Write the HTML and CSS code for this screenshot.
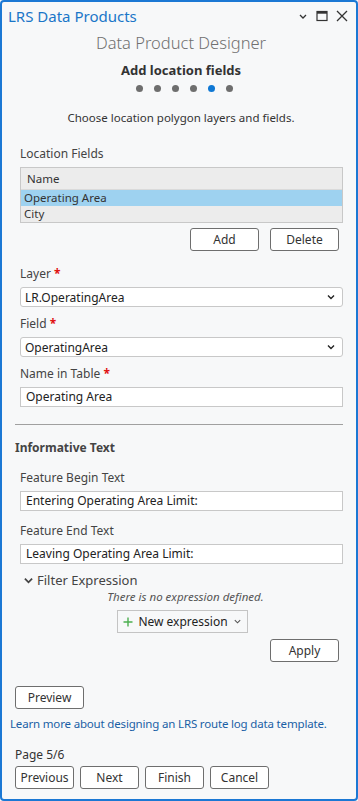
FILE: index.html
```html
<!DOCTYPE html>
<html lang="en">
<head>
  <meta charset="UTF-8" />
  <meta name="viewport" content="width=device-width, initial-scale=1.0"/>
  <title>LRS Data Products</title>
  <link rel="stylesheet" href="styles.css">
</head>
<body>
  <div class="pane">
    <div class="title-bar">
      <span class="pane-title">LRS Data Products</span>
      <div class="window-icons">
        <svg width="10" height="10" viewBox="0 0 10 10"><path d="M2 4 L5 7 L8 4" fill="none" stroke="#333" stroke-width="1.3"/></svg>
        <svg width="12" height="12" viewBox="0 0 12 12"><rect x="1" y="1.5" width="10" height="9" fill="none" stroke="#333" stroke-width="1.2"/><rect x="1" y="1.5" width="10" height="2.2" fill="#333"/></svg>
        <svg width="12" height="12" viewBox="0 0 12 12"><path d="M1 1 L11 11 M11 1 L1 11" stroke="#333" stroke-width="1.3"/></svg>
      </div>
    </div>

    <div class="designer-title">Data Product Designer</div>
    <div class="step-title">Add location fields</div>
    <div class="step-dots">
      <span class="dot"></span>
      <span class="dot"></span>
      <span class="dot"></span>
      <span class="dot"></span>
      <span class="dot active"></span>
      <span class="dot"></span>
    </div>
    <p class="step-desc">Choose location polygon layers and fields.</p>

    <div class="content">
      <div class="label">Location Fields</div>
      <div class="grid-table">
        <div class="grid-header">Name</div>
        <div class="grid-row selected">Operating Area</div>
        <div class="grid-row">City</div>
      </div>
      <div class="button-row right">
        <button class="btn">Add</button>
        <button class="btn">Delete</button>
      </div>

      <div class="label spaced">Layer <span class="req">*</span></div>
      <div class="combo">
        <span>LR.OperatingArea</span>
        <svg width="10" height="10" viewBox="0 0 10 10"><path d="M2 3.5 L5 6.5 L8 3.5" fill="none" stroke="#222" stroke-width="1.4"/></svg>
      </div>

      <div class="label">Field <span class="req">*</span></div>
      <div class="combo">
        <span>OperatingArea</span>
        <svg width="10" height="10" viewBox="0 0 10 10"><path d="M2 3.5 L5 6.5 L8 3.5" fill="none" stroke="#222" stroke-width="1.4"/></svg>
      </div>

      <div class="label">Name in Table <span class="req">*</span></div>
      <div class="text-input">Operating Area</div>
    </div>

    <hr class="divider">

    <div class="section-title">Informative Text</div>
    <div class="content">
      <div class="label">Feature Begin Text</div>
      <div class="text-input">Entering Operating Area Limit:</div>
      <div class="label">Feature End Text</div>
      <div class="text-input">Leaving Operating Area Limit:</div>

      <div class="expander">
        <svg width="9" height="9" viewBox="0 0 10 10"><path d="M1 3 L5 7 L9 3" fill="none" stroke="#444" stroke-width="2"/></svg>
        <span>Filter Expression</span>
      </div>
      <div class="no-expr">There is no expression defined.</div>
      <div class="new-expr-wrap">
        <div class="new-expr">
          <svg width="10" height="10" viewBox="0 0 10 10"><path d="M5 0.5 V9.5 M0.5 5 H9.5" stroke="#4caf50" stroke-width="1.4"/></svg>
          <span>New expression</span>
          <svg width="9" height="9" viewBox="0 0 10 10"><path d="M2 3.5 L5 6.5 L8 3.5" fill="none" stroke="#555" stroke-width="1.2"/></svg>
        </div>
      </div>
      <div class="button-row right apply-row">
        <button class="btn">Apply</button>
      </div>
    </div>

    <div class="footer">
      <button class="btn">Preview</button>
      <a class="learn-link" href="#">Learn more about designing an LRS route log data template.</a>
      <div class="page-num">Page 5/6</div>
      <div class="nav-row">
        <button class="btn nav">Previous</button>
        <button class="btn nav">Next</button>
        <button class="btn nav">Finish</button>
        <button class="btn nav">Cancel</button>
      </div>
    </div>
  </div>
</body>
</html>
```

FILE: styles.css
```css
body {
  margin: 0;
  font-family: 'Noto Sans', 'Open Sans', sans-serif;
  font-size: 12px;
  color: #333;
  background: #f7f8f9;
}
.pane {
  box-sizing: border-box;
  width: 358px;
  height: 801px;
  border: 2px solid #1b78d4;
  border-radius: 4px;
  background: #f7f8f9;
  overflow: hidden;
}
.title-bar {
  display: flex;
  align-items: center;
  justify-content: space-between;
  height: 28px;
  padding: 0 8px 0 6px;
}
.pane-title {
  color: #1a76c8;
  font-size: 15px;
}
.window-icons {
  display: flex;
  align-items: center;
  gap: 8px;
}
.designer-title {
  text-align: center;
  color: #707070;
  font-size: 16.5px;
  font-weight: 300;
  line-height: 26px;
  padding-left: 4px;
}
.step-title {
  text-align: center;
  font-weight: bold;
  font-size: 13px;
  margin-top: 5px;
  line-height: 18px;
  padding-left: 4px;
}
.step-dots {
  display: flex;
  justify-content: center;
  gap: 11px;
  margin-top: 6px;
  padding-left: 11px;
}
.dot {
  width: 7px;
  height: 7px;
  border-radius: 50%;
  background: #6e6e6e;
}
.dot.active {
  background: #0f78d4;
}
.step-desc {
  text-align: center;
  margin: 18px 0 0;
  line-height: 16px;
  font-size: 11.5px;
  padding-left: 4px;
}
.content {
  padding: 0 13px 0 18px;
}
.label {
  margin-top: 9px;
  line-height: 16px;
  height: 16px;
  color: #444;
}
.label.spaced {
  margin-top: 15px;
}
.content > .label:first-child {
  margin-top: 20px;
}
.req {
  color: #e01010;
  font-weight: bold;
}
.grid-table {
  margin-top: 5px;
  border: 1px solid #c8c8c8;
  background: #ececec;
}
.grid-header {
  height: 21px;
  line-height: 21px;
  padding-left: 6px;
  border-bottom: 1px solid #dadada;
  font-size: 11.5px;
}
.grid-row {
  height: 16px;
  line-height: 16px;
  padding-left: 3px;
  font-size: 11.5px;
}
.grid-row.selected {
  background: #9ed2f0;
}
.button-row {
  display: flex;
  gap: 11px;
  margin-top: 5px;
}
.button-row.right {
  justify-content: flex-end;
  padding-right: 4px;
}
.btn {
  box-sizing: border-box;
  width: 69px;
  height: 23px;
  border: 1px solid #6e6e6e;
  border-radius: 3px;
  background: #fff;
  font-family: inherit;
  font-size: 12px;
  color: #333;
  padding: 0;
}
.btn.nav {
  width: 59px;
}
.combo {
  display: flex;
  align-items: center;
  justify-content: space-between;
  box-sizing: border-box;
  height: 20px;
  margin-top: 5px;
  padding: 0 6px 0 4px;
  background: #fff;
  border: 1px solid #c8c8c8;
  border-radius: 3px;
  color: #222;
}
.text-input {
  box-sizing: border-box;
  height: 20px;
  line-height: 18px;
  margin-top: 5px;
  padding-left: 5px;
  background: #fff;
  border: 1px solid #c8c8c8;
  color: #222;
}
.divider {
  margin: 17px 13px 0 13px;
  border: none;
  border-top: 1px solid #a0a0a0;
}
.section-title {
  font-weight: bold;
  font-size: 12px;
  color: #444;
  margin-top: 15px;
  padding-left: 13px;
  line-height: 16px;
}
.section-title + .content > .label:first-child {
  margin-top: 14px;
}
.section-title + .content > .text-input + .label {
  margin-top: 12px;
}
.expander {
  display: flex;
  align-items: center;
  gap: 4px;
  margin-top: 7px;
  padding-left: 4px;
  font-size: 13px;
  color: #444;
  line-height: 18px;
}
.no-expr {
  text-align: center;
  font-style: italic;
  color: #555;
  font-size: 11.5px;
  line-height: 16px;
  padding-left: 8px;
}
.new-expr-wrap {
  display: flex;
  justify-content: center;
  margin-top: 5px;
  padding-left: 2px;
}
.new-expr {
  display: flex;
  align-items: center;
  gap: 5px;
  box-sizing: border-box;
  height: 23px;
  padding: 0 5px 0 5px;
  border: 1px solid #c4c4c4;
  color: #222;
}
.apply-row {
  margin-top: 6px;
}
.footer {
  padding: 0 13px;
  margin-top: 24px;
}
.learn-link {
  display: block;
  margin: 7px 0 0 -5px;
  color: #1a5fa5;
  text-decoration: none;
  line-height: 16px;
  font-size: 11.5px;
  letter-spacing: -0.17px;
}
.page-num {
  margin-top: 15px;
  line-height: 16px;
}
.nav-row {
  display: flex;
  gap: 6px;
  margin-top: 3px;
}
```
